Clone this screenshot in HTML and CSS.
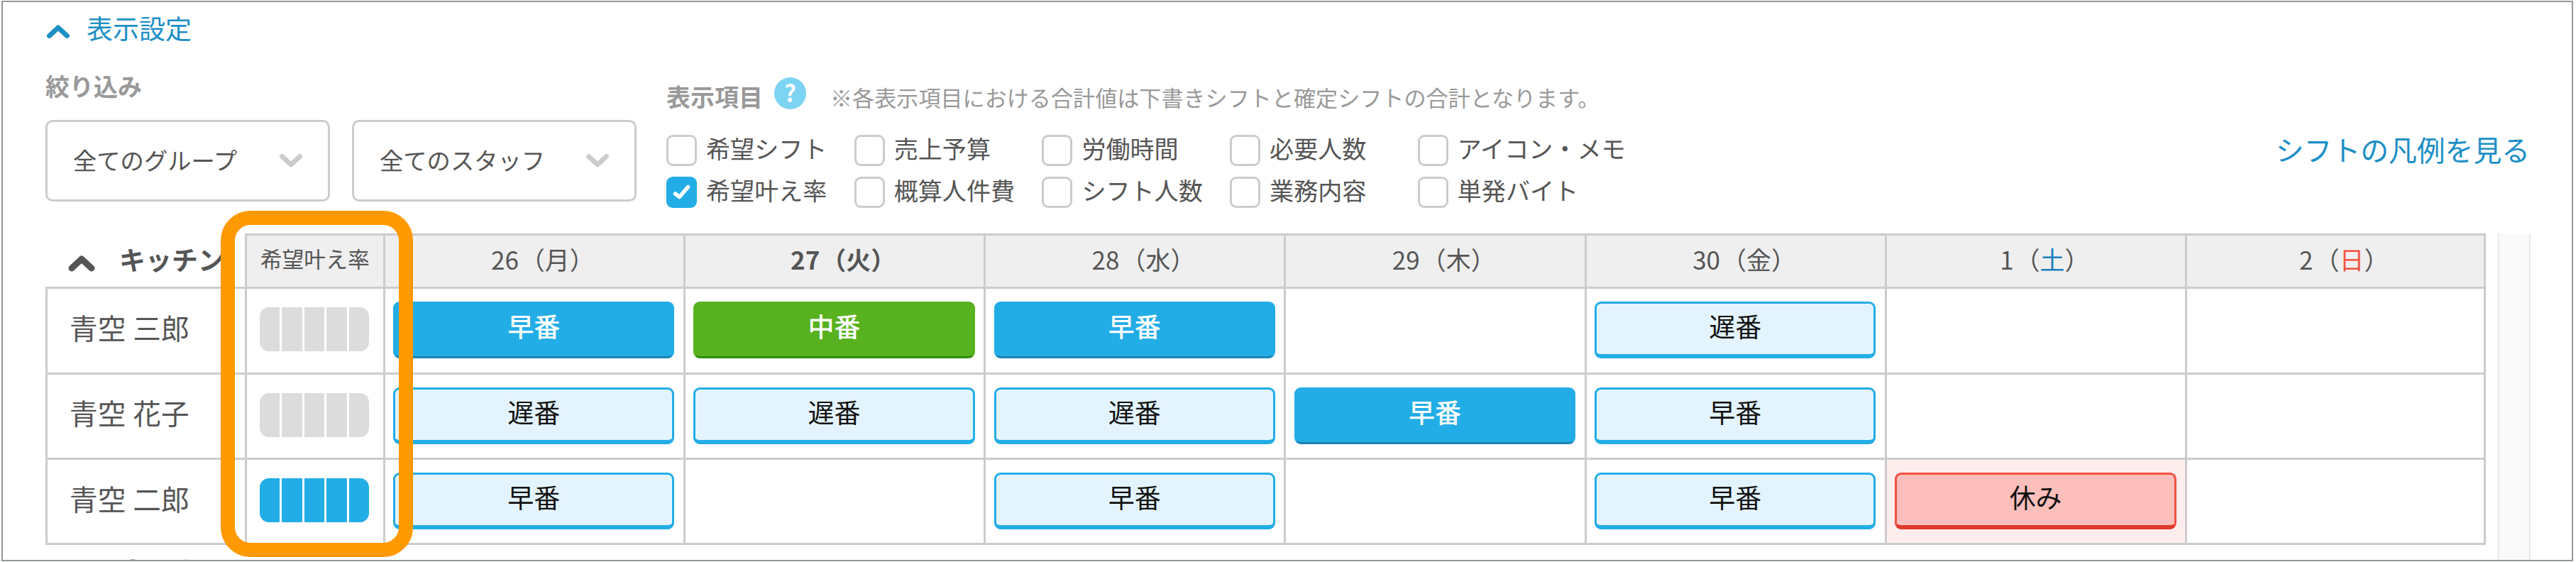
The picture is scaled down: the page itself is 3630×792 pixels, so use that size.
FILE: index.html
```
<!DOCTYPE html>
<html lang="ja">
<head>
<meta charset="utf-8">
<title>シフト表</title>
<link rel="stylesheet" href="styles.css">
</head>
<body>
<main class="frame">
  <header class="toggle">
    <svg class="toggle-icon" viewBox="0 0 34 22"><path d="M4.5 17.5 17 6 29.5 17.5"/></svg>
    <span>表示設定</span>
  </header>

  <section class="settings">
    <div class="filters">
      <h2 class="label">絞り込み</h2>
      <div class="selects">
        <div class="select"><span>全てのグループ</span><svg class="caret" viewBox="0 0 34 22"><path d="M4.5 4.5 17 16 29.5 4.5"/></svg></div>
        <div class="select"><span>全てのスタッフ</span><svg class="caret" viewBox="0 0 34 22"><path d="M4.5 4.5 17 16 29.5 4.5"/></svg></div>
      </div>
    </div>
    <div class="items">
      <div class="items-head">
        <h2 class="label">表示項目</h2>
        <span class="help">?</span>
        <p class="note">※各表示項目における合計値は下書きシフトと確定シフトの合計となります。</p>
      </div>
      <div class="checks">
        <label class="check"><i class="box"></i><span>希望シフト</span></label>
        <label class="check"><i class="box"></i><span>売上予算</span></label>
        <label class="check"><i class="box"></i><span>労働時間</span></label>
        <label class="check"><i class="box"></i><span>必要人数</span></label>
        <label class="check"><i class="box"></i><span>アイコン・メモ</span></label>
        <label class="check"><i class="box on"><svg viewBox="0 0 43 44"><path d="M12.500 24 18.500 28.500 30.500 14.500"/></svg></i><span>希望叶え率</span></label>
        <label class="check"><i class="box"></i><span>概算人件費</span></label>
        <label class="check"><i class="box"></i><span>シフト人数</span></label>
        <label class="check"><i class="box"></i><span>業務内容</span></label>
        <label class="check"><i class="box"></i><span>単発バイト</span></label>
      </div>
    </div>
    <a class="legend">シフトの凡例を見る</a>
  </section>

  <section class="schedule">
    <div class="table">
      <div class="row head">
        <div class="group"><svg class="group-icon" viewBox="0 0 38 24"><path d="M5 19 19 6 33 19"/></svg><span>キッチン</span></div>
        <div class="cell rate-head">希望叶え率</div>
        <div class="cell day"><span class="num">26</span>（月<span class="close">）</span></div>
        <div class="cell day today"><span class="num">27</span>（火<span class="close">）</span></div>
        <div class="cell day"><span class="num">28</span>（水<span class="close">）</span></div>
        <div class="cell day"><span class="num">29</span>（木<span class="close">）</span></div>
        <div class="cell day"><span class="num">30</span>（金<span class="close">）</span></div>
        <div class="cell day"><span class="num">1</span>（<span class="sat">土</span><span class="close">）</span></div>
        <div class="cell day"><span class="num">2</span>（<span class="sun">日</span><span class="close">）</span></div>
      </div>
      <div class="row">
        <div class="cell name">青空 三郎</div>
        <div class="cell rate"><div class="meter"><i></i><i></i><i></i><i></i><i></i></div></div>
        <div class="cell"><div class="shift solid">早番</div></div>
        <div class="cell"><div class="shift solid green">中番</div></div>
        <div class="cell"><div class="shift solid">早番</div></div>
        <div class="cell"></div>
        <div class="cell"><div class="shift">遅番</div></div>
        <div class="cell"></div>
        <div class="cell"></div>
      </div>
      <div class="row">
        <div class="cell name">青空 花子</div>
        <div class="cell rate"><div class="meter"><i></i><i></i><i></i><i></i><i></i></div></div>
        <div class="cell"><div class="shift">遅番</div></div>
        <div class="cell"><div class="shift">遅番</div></div>
        <div class="cell"><div class="shift">遅番</div></div>
        <div class="cell"><div class="shift solid">早番</div></div>
        <div class="cell"><div class="shift">早番</div></div>
        <div class="cell"></div>
        <div class="cell"></div>
      </div>
      <div class="row last">
        <div class="cell name">青空 二郎</div>
        <div class="cell rate"><div class="meter full"><i></i><i></i><i></i><i></i><i></i></div></div>
        <div class="cell"><div class="shift">早番</div></div>
        <div class="cell"></div>
        <div class="cell"><div class="shift">早番</div></div>
        <div class="cell"></div>
        <div class="cell"><div class="shift">早番</div></div>
        <div class="cell off"><div class="shift rest">休み</div></div>
        <div class="cell"></div>
      </div>
      <div class="next-group"><i></i><i></i></div>
    </div>
    <div class="scrollbar"></div>
  </section>
  <div class="highlight"></div>
</main>
</body>
</html>
```
FILE: styles.css
```
* { box-sizing: border-box; }

body {
  margin: 0;
  width: 3630px;
  height: 792px;
  padding: 1px 4px 1px 2px;
  overflow: hidden;
  background: #fff;
  color: #555;
  font-family: "Noto Sans CJK JP", sans-serif;
  font-size: 34px;
  line-height: 1;
}

h2, p { margin: 0; }

svg {
  display: block;
  fill: none;
  stroke: currentColor;
  stroke-linecap: round;
  stroke-linejoin: round;
}

.frame {
  position: relative;
  width: 3624px;
  height: 790px;
  border: 2px solid #939898;
  overflow: hidden;
}

.toggle {
  display: flex;
  align-items: center;
  gap: 23px;
  height: 37px;
  margin: 18px 0 0 61px;
  color: #1c8fc6;
  font-size: 37px;
}
.toggle-icon { width: 34px; height: 22px; margin-top: 8px; stroke-width: 7; }

.settings {
  display: flex;
  height: 271px;
  padding-left: 60px;
}
.label { color: #999; font-size: 34px; font-weight: 700; }

.filters { width: 875px; padding-top: 46px; }
.selects { display: flex; gap: 32px; margin-top: 31px; }
.select {
  display: flex;
  align-items: center;
  justify-content: space-between;
  width: 401px;
  height: 115px;
  padding: 0 35px 0 36px;
  border: 3px solid #ccc;
  border-radius: 10px;
  font-size: 33.300px;
}
.select span { margin-top: -4px; }
.select + .select { margin-left: -1px; }
.caret { width: 34px; height: 22px; color: #ccc; stroke-width: 7; }

.items { flex: 1; }
.items-head { display: flex; align-items: center; height: 44px; margin-top: 51px; }
.items-head .label { margin-top: 9px; }
.help {
  width: 45px;
  height: 45px;
  margin-left: 16px;
  border-radius: 50%;
  background: #7dd3f2;
  color: #fff;
  font-size: 33px;
  font-weight: 700;
  line-height: 43px;
  text-align: center;
}
.note { margin: 11px 0 0 34px; color: #999; font-size: 31.100px; }

.checks {
  display: grid;
  grid-template-columns: repeat(5, 264.7px);
  row-gap: 15px;
  margin-top: 37px;
}
.check {
  display: flex;
  align-items: center;
  gap: 13px;
  height: 44px;
  font-size: 34.100px;
  white-space: nowrap;
}
.check span { margin-top: -7px; }
.box { flex: none; width: 43px; height: 44px; border: 3px solid #ccc; border-radius: 9px; }
.box.on { border: 0; background: #23ade6; color: #fff; }
.box svg { width: 43px; height: 44px; stroke-width: 5.500; }

.legend { margin: 132px 59px 0 0; color: #1c8fc6; font-size: 39.800px; }

.schedule { display: flex; padding-left: 60px; }
.table { width: 3441px; }
.row { display: grid; grid-template-columns: 281px 194.500px repeat(7, 423.300px); height: 120.500px; }
.head { height: 75px; }
.last { height: 123px; }
.cell {
  border: 0 solid #ccc;
  border-width: 3px 0 0 3px;
  padding: 18px 12.500px 0 11.500px;
}
.cell:last-child { border-right-width: 3px; }
.last .cell { border-bottom-width: 3px; }

.group {
  display: flex;
  align-items: center;
  gap: 34px;
  padding-left: 32px;
  font-size: 37px;
  font-weight: 700;
  white-space: nowrap;
}
.group span { margin-top: -3px; }
.group-icon { width: 38px; height: 24px; margin-top: 8px; stroke-width: 9; }

.head .cell {
  display: flex;
  align-items: center;
  justify-content: center;
  padding: 0 0 7px;
  background: #efefef;
  white-space: nowrap;
}
.head .rate-head { font-size: 30.800px; }
.head .day { padding-left: 7px; font-size: 35px; }
.today { font-weight: 700; }
.num { margin-right: 2px; }
.close { margin-right: -0.5em; }
.sat { color: #1b7fbd; }
.sun { color: #f4523f; }

.name { display: flex; align-items: center; padding: 0 0 10px 31px; font-size: 39.700px; word-spacing: 1px; }

.row .rate { padding: 26px 0 0 18px; }
.meter { display: flex; gap: 3px; width: 154px; height: 62px; border-radius: 13px; overflow: hidden; }
.meter i { flex: 1; background: #dcdcdc; }
.meter.full i { background: #23ade6; }

.shift {
  height: 80px;
  border: 3px solid #23ade6;
  border-bottom-width: 6px;
  border-radius: 9px;
  background: #e4f4fe;
  color: #111;
  font-size: 37px;
  line-height: 62px;
  text-align: center;
}
.shift.solid {
  border-bottom: 3px solid #1a86b5;
  background: #23ade6;
  color: #fff;
  font-weight: 500;
}
.shift.green { border-color: #58b11f; border-bottom-color: #318c0c; background: #58b11f; }
.shift.rest { border-color: #f2503f; border-bottom-color: #e03a2a; background: #fdbfbb; }
.off { background: #feeded; }

/* Top edge of the next group's heading, cut off by the frame */
.next-group { display: flex; gap: 70px; padding: 20px 0 0 120px; }
.next-group i { width: 6px; height: 2px; background: #aaa; }
.next-group i + i { background: #e4e4e4; }

.scrollbar {
  width: 46px;
  height: 462px;
  margin-left: 15px;
  border: 0 solid #e8e8e8;
  border-width: 0 2px;
  background: #fafafa;
}

/* Callout laid over the fulfilment-rate column */
.highlight {
  position: absolute;
  left: 307px;
  top: 294px;
  width: 271px;
  height: 488px;
  border: 20px solid #ff9900;
  border-radius: 42px;
}
```
